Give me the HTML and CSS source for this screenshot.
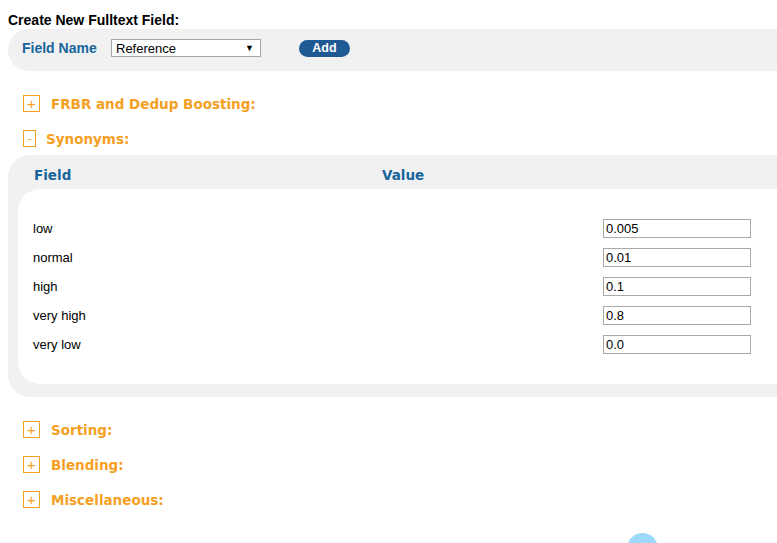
FILE: index.html
```html
<!DOCTYPE html>
<html lang="en">
<head>
    <meta charset="UTF-8">
    <title>Fulltext Fields</title>
    <link rel="stylesheet" href="styles.css">
</head>
<body>
    <div class="create-title">Create New Fulltext Field:</div>
    <div class="create-panel">
        <label class="field-label" for="fieldName">Field Name</label>
        <div class="select-box" id="fieldName">
            <span>Reference</span>
            <span class="arrow">&#9660;</span>
        </div>
        <button class="add-btn">Add</button>
    </div>

    <div class="section first">
        <span class="toggle">+</span>
        <h2>FRBR and Dedup Boosting:</h2>
    </div>

    <div class="section open">
        <span class="toggle minus">-</span>
        <h2>Synonyms:</h2>
    </div>

    <div class="syn-panel">
        <div class="syn-head">
            <span class="col-field">Field</span>
            <span class="col-value">Value</span>
        </div>
        <div class="syn-body">
            <div class="syn-row"><span>low</span><input type="text" value="0.005"></div>
            <div class="syn-row"><span>normal</span><input type="text" value="0.01"></div>
            <div class="syn-row"><span>high</span><input type="text" value="0.1"></div>
            <div class="syn-row"><span>very high</span><input type="text" value="0.8"></div>
            <div class="syn-row"><span>very low</span><input type="text" value="0.0"></div>
        </div>
    </div>

    <div class="section">
        <span class="toggle">+</span>
        <h2>Sorting:</h2>
    </div>
    <div class="section">
        <span class="toggle">+</span>
        <h2>Blending:</h2>
    </div>
    <div class="section">
        <span class="toggle">+</span>
        <h2>Miscellaneous:</h2>
    </div>

    <div class="scroll-dot"></div>
</body>
</html>
```

FILE: styles.css
```css
:root {
    --orange: #f5a023;
    --blue: #17659b;
    --btn-blue: #1f5a94;
    --panel: #f1f1f1;
}

* {
    margin: 0;
    padding: 0;
    box-sizing: border-box;
}

body {
    font-family: "Liberation Sans", Arial, sans-serif;
    font-size: 13px;
    color: #000;
    background: #fff;
    margin: 0 0 0 8px;
    padding-top: 12px;
    overflow: hidden;
}

.create-title {
    font-weight: bold;
    font-size: 14px;
    line-height: 17px;
}

.create-panel {
    background: var(--panel);
    border-radius: 21px 0 0 21px;
    height: 42px;
    display: flex;
    align-items: center;
    padding-left: 14px;
    padding-bottom: 4px;
}

.field-label {
    font-weight: bold;
    font-size: 14px;
    color: var(--blue);
    width: 89px;
}

.select-box {
    width: 150px;
    height: 18px;
    border: 1px solid #a6a6a6;
    background: #fff;
    display: flex;
    align-items: center;
    justify-content: space-between;
    padding: 0 6px 0 4px;
    font-size: 13px;
}

.select-box .arrow {
    font-size: 9px;
}

.add-btn {
    margin-left: 38px;
    width: 51px;
    height: 17px;
    border: none;
    border-radius: 9px;
    background: var(--btn-blue);
    color: #fff;
    font-family: "Liberation Sans", Arial, sans-serif;
    font-weight: bold;
    font-size: 12.5px;
}

.section {
    display: flex;
    align-items: center;
    height: 17px;
    margin-left: 15px;
    margin-top: 18px;
}

.section.first {
    margin-top: 24px;
}

.toggle {
    width: 17px;
    height: 17px;
    border: 1px solid var(--orange);
    color: var(--orange);
    display: flex;
    align-items: center;
    justify-content: center;
    font-size: 15px;
    font-family: "Liberation Sans", Arial, sans-serif;
}

.toggle.minus {
    width: 13px;
    font-size: 12px;
}

.section h2 {
    font-family: "DejaVu Sans", Verdana, sans-serif;
    font-size: 13.5px;
    font-weight: bold;
    color: var(--orange);
    margin-left: 11px;
    padding-top: 1px;
}

.section.open h2 {
    margin-left: 10px;
}

.syn-panel {
    background: var(--panel);
    border-radius: 22px 0 0 22px;
    margin-top: 8px;
    padding: 0 0 13px 10px;
    margin-bottom: 24px;
}

.syn-head {
    height: 34px;
    display: flex;
    align-items: center;
    font-family: "DejaVu Sans", Verdana, sans-serif;
    font-weight: bold;
    font-size: 13.5px;
    color: var(--blue);
    padding-top: 6px;
}

.col-field {
    margin-left: 16px;
    width: 348px;
}

.syn-body {
    background: #fff;
    border-radius: 22px 0 0 22px;
    padding: 30px 0 30px 15px;
    display: flex;
    flex-direction: column;
    gap: 10px;
}

.syn-row {
    display: flex;
    align-items: center;
    height: 19px;
}

.syn-row span {
    width: 570px;
}

.syn-row input {
    width: 148px;
    height: 19px;
    border: 1px solid #a9a9a9;
    font-family: "Liberation Sans", Arial, sans-serif;
    font-size: 13px;
    padding: 0 2px;
}

.scroll-dot {
    position: fixed;
    left: 627px;
    bottom: -21px;
    width: 31px;
    height: 31px;
    border-radius: 50%;
    background: #9ed9fb;
}
```
